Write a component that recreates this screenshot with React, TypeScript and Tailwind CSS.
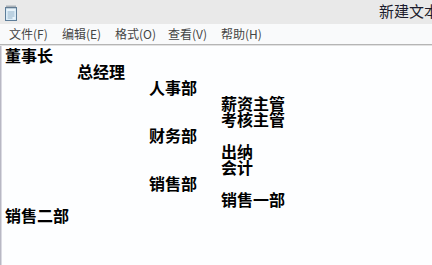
import React from "react";

const lines: { indent: number; text: string }[] = [
  { indent: 0, text: "董事长" },
  { indent: 1, text: "总经理" },
  { indent: 2, text: "人事部" },
  { indent: 3, text: "薪资主管" },
  { indent: 3, text: "考核主管" },
  { indent: 2, text: "财务部" },
  { indent: 3, text: "出纳" },
  { indent: 3, text: "会计" },
  { indent: 2, text: "销售部" },
  { indent: 3, text: "销售一部" },
  { indent: 0, text: "销售二部" },
];

const menus = ["文件(F)", "编辑(E)", "格式(O)", "查看(V)", "帮助(H)"];

function NotepadIcon() {
  return (
    <svg width="16" height="18" viewBox="0 0 16 18">
      <rect x="2.5" y="3.5" width="11" height="13" fill="#cfe6f5" stroke="#5d7d99" />
      <rect x="3.5" y="4.5" width="9" height="11" fill="#e8f3fb" />
      <path d="M4.5 8h7M4.5 10h7M4.5 12h7M4.5 14h5" stroke="#8fb0c8" strokeWidth="1" />
      <path d="M4 1.5v3M6 1.5v3M8 1.5v3M10 1.5v3M12 1.5v3" stroke="#6b7b88" strokeWidth="1" />
    </svg>
  );
}

export default function App() {
  return (
    <div
      className="w-[432px] h-[265px] overflow-hidden flex flex-col bg-white"
      style={{ fontFamily: '"Noto Sans CJK SC", "Noto Sans", sans-serif' }}
    >
      {/* Title bar */}
      <div className="h-[24px] shrink-0 bg-[#e9e9e9] flex items-center relative">
        <div className="pl-[3px] pt-[1px]">
          <NotepadIcon />
        </div>
        <div className="absolute left-[379px] top-[1px] whitespace-nowrap text-[15px] leading-[20px] text-[#1c1c2c]">
          新建文本文档.txt - 记事本
        </div>
      </div>

      {/* Menu bar */}
      <div className="h-[20px] shrink-0 bg-[#f9fafb] flex items-center pl-[9px] gap-[17px] text-[12px] leading-[16px] text-[#454545]">
        {menus.map((m) => (
          <span key={m} className="w-[36px] whitespace-nowrap">{m}</span>
        ))}
      </div>
      <div className="h-[1px] bg-[#b5b5b5] shrink-0" />
      <div className="h-[1px] bg-[#e2e2e2] shrink-0" />

      {/* Edit area */}
      <div className="flex-1 flex">
        <div className="w-[1px] bg-[#b8b8c4]" />
        <div className="w-[1px] bg-[#dadae2]" />
        <div className="flex-1 bg-[#fdfeff] pl-[3px] pt-[1px] text-[16px] leading-[16px] font-bold text-black">
          {lines.map((l, i) => (
            <div key={i} className="h-[16px] whitespace-nowrap" style={{ paddingLeft: l.indent * 72 }}>
              {l.text}
            </div>
          ))}
        </div>
      </div>
    </div>
  );
}
